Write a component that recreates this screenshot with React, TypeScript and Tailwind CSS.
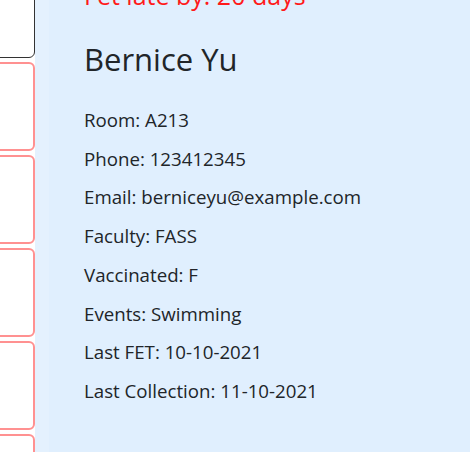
const CARDS = ['dark', 'red', 'red', 'red', 'red', 'red']

const DETAILS = [
  'Room: A213',
  'Phone: 123412345',
  'Email: berniceyu@example.com',
  'Faculty: FASS',
  'Vaccinated: F',
  'Events: Swimming',
  'Last FET: 10-10-2021',
  'Last Collection: 11-10-2021',
]

export default function App() {
  return (
    <div
      className="flex h-[452px] w-[470px] overflow-hidden bg-white text-[#212529]"
      style={{ fontFamily: '"Open Sans", "Noto Sans", sans-serif' }}
    >
      {/* Resident list (scrolled) */}
      <div className="w-[35px] shrink-0 overflow-hidden">
        <div className="-ml-[66px] -mt-[31px] flex w-[101px] flex-col gap-[4px]">
          {CARDS.map((kind, i) => (
            <div
              key={i}
              className={
                kind === 'dark'
                  ? 'h-[89px] shrink-0 rounded-md border border-[#333] bg-white'
                  : 'h-[89px] shrink-0 rounded-md border-2 border-[#ff9191] bg-white'
              }
            />
          ))}
        </div>
      </div>

      {/* Details */}
      <div className="w-[14px] shrink-0 bg-[#e4f1fe]" />
      <div className="flex-1 bg-[#e0effe] pl-[35px]">
        <div className="-mt-[23px] text-[25px] leading-[36px] text-[#ff1a1a]">Fet late by: 20 days</div>
        <h2 className="mt-[24px] text-[31px] leading-[44px]">Bernice Yu</h2>
        <div className="mt-[20px] flex flex-col text-[18.7px] leading-[38.7px]">
          {DETAILS.map((d) => (
            <div key={d}>{d}</div>
          ))}
        </div>
      </div>
    </div>
  )
}
